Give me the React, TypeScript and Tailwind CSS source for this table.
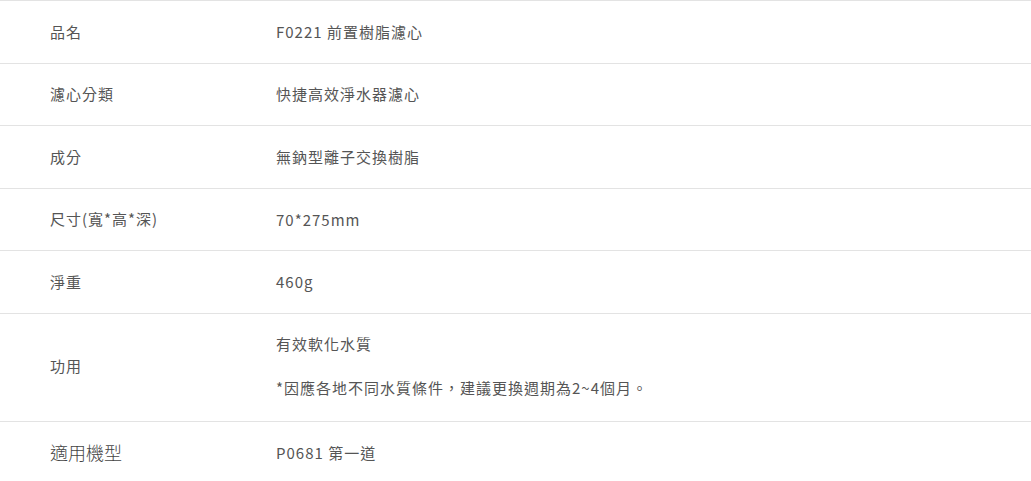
import React from 'react';

type Row = {
  label: string;
  values: string[];
  big?: boolean;
};

const rows: Row[] = [
  { label: '品名', values: ['F0221 前置樹脂濾心'] },
  { label: '濾心分類', values: ['快捷高效淨水器濾心'] },
  { label: '成分', values: ['無鈉型離子交換樹脂'] },
  { label: '尺寸(寬*高*深)', values: ['70*275mm'] },
  { label: '淨重', values: ['460g'] },
  { label: '功用', values: ['有效軟化水質', '*因應各地不同水質條件，建議更換週期為2~4個月。'] },
  { label: '適用機型', values: ['P0681 第一道'], big: true },
];

export default function App() {
  return (
    <div className="w-[1031px] h-[481px] overflow-hidden bg-white font-['Noto_Sans_CJK_TC',sans-serif] text-[15px] tracking-[1px] text-[#555]">
      <div className="border-t border-[#e3e3e3]">
        {rows.map((row) => (
          <div
            key={row.label}
            className={
              row.values.length > 1
                ? 'flex items-center border-b border-[#e3e3e3] pt-[19px] pb-[22px]'
                : 'flex items-center border-b border-[#e3e3e3] h-[62.6px]'
            }
          >
            <div
              className={
                row.big
                  ? 'w-[276px] shrink-0 pl-[50px] text-[18px] tracking-[0px] font-light text-[#444]'
                  : 'w-[276px] shrink-0 pl-[50px]'
              }
            >
              {row.label}
            </div>
            <div className="flex flex-col gap-[22px]">
              {row.values.map((v) => (
                <p key={v} className="leading-[22px]">{v}</p>
              ))}
            </div>
          </div>
        ))}
      </div>
    </div>
  );
}
